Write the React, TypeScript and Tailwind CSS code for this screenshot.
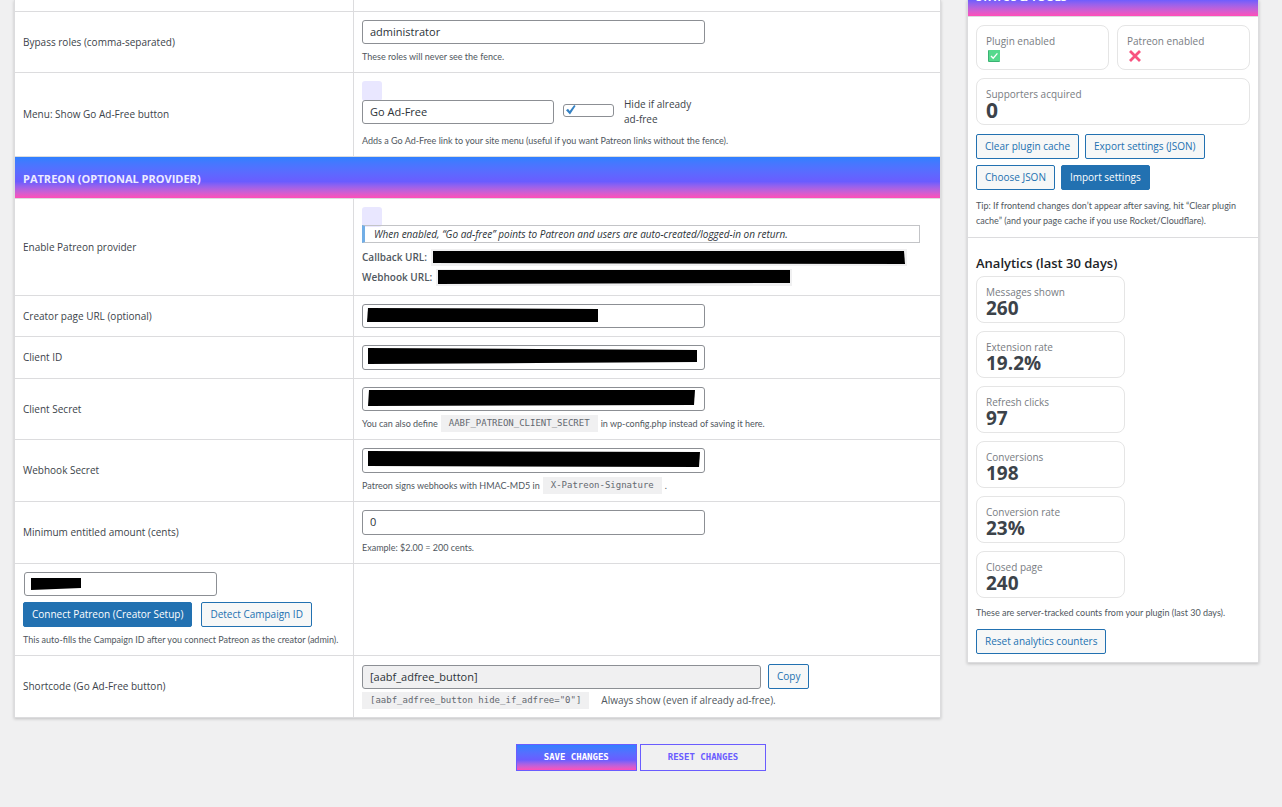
import { clsx } from "clsx";
import type { ComponentProps, ReactNode } from "react";

const analytics = [
  { label: "Messages shown", value: "260" },
  { label: "Extension rate", value: "19.2%" },
  { label: "Refresh clicks", value: "97" },
  { label: "Conversions", value: "198" },
  { label: "Conversion rate", value: "23%" },
  { label: "Closed page", value: "240" },
];

function Row({
  label,
  htmlFor,
  children,
}: {
  label: ReactNode;
  htmlFor?: string;
  children?: ReactNode;
}) {
  return (
    <div className="grid grid-cols-[339px_minmax(0,1fr)] border-b border-[#dcdcde] last:border-b-0">
      <div className="flex items-center border-r border-[#dcdcde] p-2">
        {htmlFor ? <label htmlFor={htmlFor}>{label}</label> : label}
      </div>
      <div className="p-2">{children}</div>
    </div>
  );
}

function TextInput({ className, ...props }: ComponentProps<"input">) {
  return (
    <input
      className={clsx(
        "block rounded-[3px] border border-[#8c8f94] px-[7px] pb-[2px] text-[11px] text-[#2c3338]",
        className,
      )}
      {...props}
    />
  );
}

// Masked value drawn over a field, slightly uneven like a marker stroke
function Mask({
  width,
  points,
  className,
}: {
  width: number;
  points: string;
  className?: string;
}) {
  return (
    <svg
      width={width}
      height="17"
      className={clsx("pointer-events-none", className)}
      aria-hidden="true"
    >
      <polygon points={points} fill="#000" />
    </svg>
  );
}

function Hint({
  className,
  children,
}: {
  className?: string;
  children: ReactNode;
}) {
  return (
    <p
      className={clsx(
        "font-[Lato,sans-serif] text-[9px] leading-[15px] text-[#50575e]",
        className,
      )}
    >
      {children}
    </p>
  );
}

function Code({ children }: { children: ReactNode }) {
  return (
    <code className="inline-block bg-[#f0f0f1] px-2 font-['DejaVu_Sans_Mono',monospace] text-[9px] leading-[17px] text-[#646970]">
      {children}
    </code>
  );
}

function Button({
  primary,
  children,
}: {
  primary?: boolean;
  children: ReactNode;
}) {
  return (
    <button
      type="button"
      className={clsx(
        "h-[25px] rounded-[2px] border border-[#2271b1] px-2 whitespace-nowrap",
        primary
          ? "bg-[#2271b1] font-medium text-white"
          : "bg-[#f6f7f7] text-[#2271b1]",
      )}
    >
      {children}
    </button>
  );
}

function Stat({ label, children }: { label: string; children: ReactNode }) {
  return (
    <div className="rounded-lg border border-[#e5e5e5] px-[9px] pt-[9px] pb-[5px]">
      <div className="leading-[13px] text-[#787c82]">{label}</div>
      {children}
    </div>
  );
}

export default function App() {
  return (
    <div className="min-h-screen bg-[#f0f0f1] font-['Open_Sans',sans-serif] text-[10px] leading-[15px] text-[#3c434a]">
      <div className="grid grid-cols-[minmax(0,1fr)_292px] items-start gap-[26px] pr-[23px] pl-[14px]">
        <main className="border-x border-b border-[#dcdcde] bg-white shadow-[0_1px_3px_rgba(0,0,0,0.2)]">
          <div className="grid h-3 grid-cols-[339px_minmax(0,1fr)] border-b border-[#dcdcde]">
            <div className="border-r border-[#dcdcde]" />
          </div>
          <Row label="Bypass roles (comma-separated)" htmlFor="roles">
            <TextInput
              id="roles"
              defaultValue="administrator"
              className="h-6 w-[343px]"
            />
            <Hint className="mt-[5px]">
              These roles will never see the fence.
            </Hint>
          </Row>
          <Row label="Menu: Show Go Ad-Free button" htmlFor="menu">
            <div className="-mb-1 size-5 rounded-[3px] bg-[#e9e7ff]" />
            <div className="flex h-[30px] items-center">
              <TextInput
                id="menu"
                defaultValue="Go Ad-Free"
                className="h-6 w-48 bg-white"
              />
              <span className="ml-[9px] grid pb-[3px]">
                <input
                  id="hide"
                  type="checkbox"
                  defaultChecked
                  className="col-start-1 row-start-1 h-[13px] w-[51px] appearance-none rounded-[3px] border border-[#8c8f94] bg-white"
                />
                <svg
                  viewBox="0 0 12 12"
                  className="pointer-events-none col-start-1 row-start-1 ml-[2px] size-3"
                  aria-hidden="true"
                >
                  <path
                    d="M1 6.2 L3 4.7 L4.7 7 L9.2 1 L10.6 2 L5 10.4 Z"
                    fill="#3582c4"
                  />
                </svg>
              </span>
              <label htmlFor="hide" className="ml-[10px] w-20">
                Hide if already ad-free
              </label>
            </div>
            <Hint className="mt-[6px]">
              Adds a Go Ad-Free link to your site menu (useful if you want
              Patreon links without the fence).
            </Hint>
          </Row>

          <h2 className="flex h-[42px] items-center border-b border-[#dcdcde] bg-linear-to-b from-[#2f80ff] via-[#6a5cff] via-60% to-[#ff4db8] px-2 pt-[2px] text-[11px] font-bold text-[#ecebff]">
            PATREON (OPTIONAL PROVIDER)
          </h2>

          <Row label="Enable Patreon provider">
            <div className="-mb-[2px] size-5 rounded-[3px] bg-[#e9e7ff]" />
            <p className="w-[558px] border border-l-[3px] border-[#c3c4c7] border-l-[#72aee6] pl-[9px] text-[10px] leading-4 text-[#2c3338] italic">
              When enabled, “Go ad-free” points to Patreon and users are
              auto-created/logged-in on return.
            </p>
            <div className="mt-1 flex h-5 items-center gap-1 font-semibold text-[#50575e]">
              Callback URL:
              <code className="bg-[#f0f0f1] px-[2px]">
                <Mask width={472} points="0,2 471,2 472,15 0,14" />
              </code>
            </div>
            <div className="flex h-5 items-center gap-1 font-semibold text-[#50575e]">
              Webhook URL:
              <code className="bg-[#f0f0f1] px-[2px]">
                <Mask width={352} points="0,1 352,1 352,14 0,15" />
              </code>
            </div>
          </Row>
          <Row label="Creator page URL (optional)" htmlFor="creator">
            <div className="relative">
              <TextInput id="creator" className="h-6 w-[343px]" />
              <Mask
                width={231}
                points="1,1 231,2 231,15 0,15"
                className="absolute top-[3px] left-[5px]"
              />
            </div>
          </Row>
          <Row label="Client ID" htmlFor="client-id">
            <div className="relative">
              <TextInput id="client-id" className="h-[25px] w-[343px]" />
              <Mask
                width={329}
                points="0,0 170,1 329,2 329,14 170,15 0,16"
                className="absolute top-[3px] left-[6px]"
              />
            </div>
          </Row>
          <Row label="Client Secret" htmlFor="client-secret">
            <div className="relative">
              <TextInput id="client-secret" className="h-6 w-[343px]" />
              <Mask
                width={327}
                points="1,0 327,0 326,15 0,16"
                className="absolute top-[3px] left-[6px]"
              />
            </div>
            <Hint className="mt-[5px] flex h-[15px] items-center gap-[3px]">
              You can also define <Code>AABF_PATREON_CLIENT_SECRET</Code> in
              wp-config.php instead of saving it here.
            </Hint>
          </Row>
          <Row label="Webhook Secret" htmlFor="webhook-secret">
            <div className="relative">
              <TextInput id="webhook-secret" className="h-[25px] w-[343px]" />
              <Mask
                width={332}
                points="0,0 332,1 331,16 0,15"
                className="absolute top-[3px] left-[6px]"
              />
            </div>
            <Hint className="mt-[5px] flex h-[15px] items-center gap-[3px]">
              Patreon signs webhooks with HMAC-MD5 in{" "}
              <Code>X-Patreon-Signature</Code>.
            </Hint>
          </Row>
          <Row label="Minimum entitled amount (cents)" htmlFor="minimum">
            <TextInput
              id="minimum"
              defaultValue="0"
              className="h-[25px] w-[343px]"
            />
            <Hint className="mt-[5px]">Example: $2.00 = 200 cents.</Hint>
          </Row>
          <Row
            label={
              <div>
                <div className="relative">
                  <TextInput
                    aria-label="Campaign ID"
                    className="ml-px h-6 w-[193px]"
                  />
                  <Mask
                    width={50}
                    points="0,0 50,0 50,10 0,12"
                    className="absolute top-[6px] left-2"
                  />
                </div>
                <div className="mt-[6px] flex gap-[9px]">
                  <Button primary>Connect Patreon (Creator Setup)</Button>
                  <Button>Detect Campaign ID</Button>
                </div>
                <Hint className="mt-[5px]">
                  This auto-fills the Campaign ID after you connect Patreon as
                  the creator (admin).
                </Hint>
              </div>
            }
          />
          <Row label="Shortcode (Go Ad-Free button)" htmlFor="shortcode">
            <div className="flex items-end gap-[7px]">
              <TextInput
                id="shortcode"
                readOnly
                value="[aabf_adfree_button]"
                className="h-6 w-[399px] bg-[#f0f0f1]"
              />
              <Button>Copy</Button>
            </div>
            <div className="mt-[3px] flex h-[17px] items-center gap-3 text-[#50575e]">
              <Code>[aabf_adfree_button hide_if_adfree="0"]</Code>
              Always show (even if already ad-free).
            </div>
          </Row>
        </main>

        <aside className="border-x border-b border-[#dcdcde] bg-white shadow-[0_1px_3px_rgba(0,0,0,0.2)]">
          {/* only the lower edge of the panel title is in view */}
          <div className="flex h-[17px] flex-col justify-end overflow-hidden border-b border-[#dcdcde]">
            <h2 className="flex h-[41px] shrink-0 items-center bg-linear-to-b from-[#2f80ff] via-[#6a5cff] via-60% to-[#ff4db8] px-2 pt-px text-[11px] font-bold text-white">
              STATUS &amp; TOOLS
            </h2>
          </div>
          <div className="border-b border-[#dcdcde] p-2 pb-[9px]">
            <div className="grid grid-cols-2 gap-2">
              <Stat label="Plugin enabled">
                <svg
                  viewBox="0 0 12 12"
                  className="my-[2px] ml-[2px] size-3"
                  role="img"
                  aria-label="Yes"
                >
                  <rect width="12" height="12" rx="1" fill="#3bb273" />
                  <rect x="1" width="11" height="11" fill="#55d98d" />
                  <path
                    d="M3 6 L5.2 8.2 L9.4 3.4"
                    fill="none"
                    stroke="#fff"
                    strokeWidth="1.3"
                  />
                </svg>
              </Stat>
              <Stat label="Patreon enabled">
                <svg
                  viewBox="0 0 12 12"
                  className="my-[2px] ml-[2px] size-3"
                  role="img"
                  aria-label="No"
                >
                  <path
                    d="M1 1 L11 11 M11 1 L1 11"
                    stroke="#f8527f"
                    strokeWidth="2.8"
                  />
                </svg>
              </Stat>
              <div className="col-span-2">
                <Stat label="Supporters acquired">
                  <div className="text-[21px] leading-[18px] font-bold">0</div>
                </Stat>
              </div>
            </div>
            <div className="mt-[9px] flex flex-wrap gap-[6px]">
              <Button>Clear plugin cache</Button>
              <Button>Export settings (JSON)</Button>
              <Button>Choose JSON</Button>
              <Button primary>Import settings</Button>
            </div>
            <Hint className="mt-2">
              Tip: If frontend changes don’t appear after saving, hit “Clear
              plugin cache” (and your page cache if you use Rocket/Cloudflare).
            </Hint>
          </div>
          <div className="px-2 pt-[15px] pb-2">
            <h3 className="pb-[3px] text-[13px] leading-5 font-semibold text-[#1d2327]">
              Analytics (last 30 days)
            </h3>
            <div className="grid w-[149px] gap-2">
              {analytics.map((item) => (
                <Stat key={item.label} label={item.label}>
                  <div className="text-[19px] leading-[18px] font-bold">
                    {item.value}
                  </div>
                </Stat>
              ))}
            </div>
            <Hint className="mt-[7px] mb-[9px]">
              These are server-tracked counts from your plugin (last 30 days).
            </Hint>
            <Button>Reset analytics counters</Button>
          </div>
        </aside>
      </div>

      <div className="flex justify-center gap-[3px] pt-[26px] pb-9 font-['DejaVu_Sans_Mono',monospace] text-[9px] font-bold">
        <button
          type="submit"
          className="h-[27px] border border-[#6a5cff] bg-linear-to-b from-[#2f80ff] via-[#6a5cff] via-60% to-[#ff4db8] px-[27px] text-white"
        >
          SAVE CHANGES
        </button>
        <button
          type="reset"
          className="h-[27px] border border-[#6a5cff] px-[27px] text-[#6a5cff]"
        >
          RESET CHANGES
        </button>
      </div>
    </div>
  );
}
